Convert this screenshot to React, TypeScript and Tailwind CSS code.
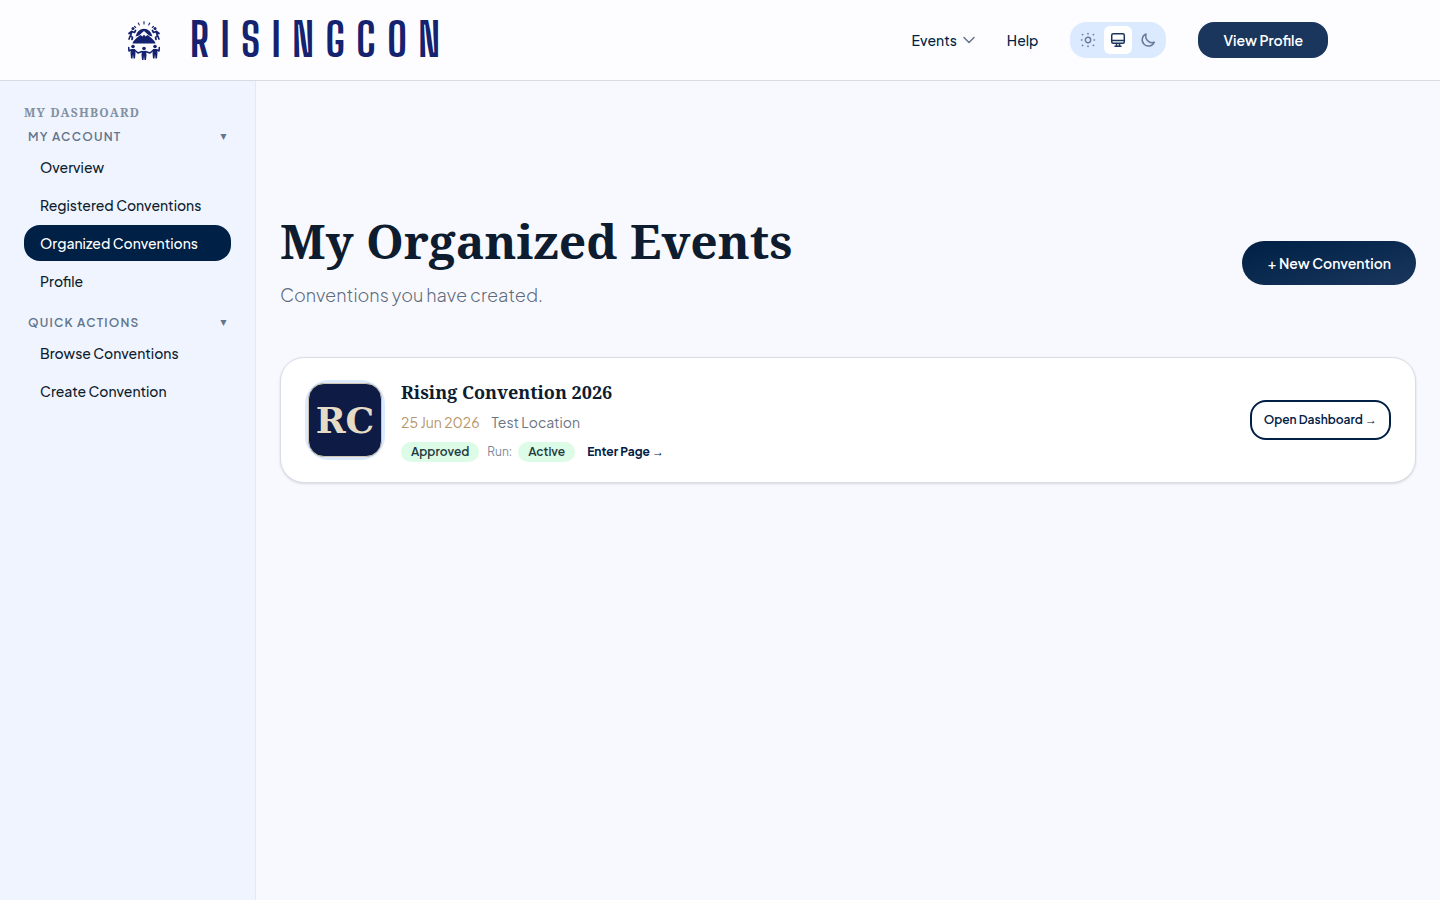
import React from 'react';

const sans = "font-['Plus_Jakarta_Sans','Inter',sans-serif]";
const serif = "font-['Noto_Serif','Droid_Serif','DejaVu_Serif',serif]";

const menu = [
  {
    title: 'My Account',
    items: ['Overview', 'Registered Conventions', 'Organized Conventions', 'Profile'],
  },
  {
    title: 'Quick Actions',
    items: ['Browse Conventions', 'Create Convention'],
  },
];

const activeItem = 'Organized Conventions';

const Emblem: React.FC = () => (
  <svg width="32" height="40" viewBox="0 0 32 40" fill="#15226f" aria-hidden="true">
    {/* Rays */}
    <g stroke="#15226f" strokeWidth="1.1" strokeLinecap="round">
      <path d="M16 1.5v2.5M10.300 3l1 2M21.700 3l-1 2M6.500 6.300l1.200 1.200M25.500 6.300l-1.200 1.200" />
    </g>
    {/* Sun */}
    <path d="M7.500 16.500a8.700 9.800 0 0 1 17 0l-3.500-1-5-4.500-5 4.500z" />
    {/* Mountain */}
    <path d="M4.500 23.500c.5-2.500 2.500-4 4-5.500l4-3 2 1.500 1.500-2 1.500 2 2-1.500 4 3c1.500 1.500 3.500 3 4 5.500z" />
    {/* Climbers */}
    <circle cx="5" cy="8.500" r="1.500" />
    <circle cx="27" cy="8.500" r="1.500" />
    <g fill="none" stroke="#15226f" strokeWidth="1.700" strokeLinecap="round" strokeLinejoin="round">
      <path d="M4 11.500l-1.500 4 2 2-.5 2M2.500 15.500l-1.500 3.500M4 11.500l2.500 1 1-2M3.500 11.500l-2.500 2" />
      <path d="M28 11.500l1.500 4-2 2 .5 2M29.500 15.500l1.500 3.500M28 11.500l-2.500 1-1-2M28.500 11.500l2.500 2" />
    </g>
    {/* People holding hands */}
    <circle cx="5" cy="26.500" r="1.800" />
    <circle cx="16" cy="28.500" r="1.800" />
    <circle cx="27" cy="26.500" r="1.800" />
    <path d="M3 29h4l.5 4-.5 5.500H5.500l-.5-4-.5 4H3l-.5-5.500zM14 31h4l.5 4-.5 5h-1.500l-.5-4-.5 4H14l-.5-5zM25 29h4l.5 4-.5 5.500h-1.500l-.5-4-.5 4H25l-.5-5.500z" />
    <g fill="none" stroke="#15226f" strokeWidth="1.600" strokeLinecap="round" strokeLinejoin="round">
      <path d="M3 30l-2 1-.3-3.500M6.500 30l3.500 3 4-1.500M17.500 31.500l4.500 1.500 3.500-3M29 30l2 1 .3-3.500" />
    </g>
  </svg>
);

const iconProps = {
  width: 16,
  height: 16,
  viewBox: '0 0 16 16',
  fill: 'none',
  stroke: 'currentColor',
  strokeLinecap: 'round' as const,
  strokeLinejoin: 'round' as const,
};

const SunIcon = () => (
  <svg {...iconProps}>
    <circle cx="8" cy="8" r="2.700" strokeWidth="1.400" />
    <path
      d="M8 1.500v.4M8 14.100v.4M1.500 8h.4M14.100 8h.4M2.500 2.500l.2.2M13.300 13.300l.2.2M2.500 13.500l.2-.2M13.300 2.700l.2-.2"
      strokeWidth="1.600"
    />
  </svg>
);

const MonitorIcon = () => (
  <svg {...iconProps} strokeWidth="1.500">
    <rect x="1.700" y="1.700" width="12.600" height="9.600" rx="1.500" />
    <path d="M2 8.500h12M6.500 11.500v2.500M9.500 11.500v2.500M5 14.200h6" />
  </svg>
);

const MoonIcon = () => (
  <svg {...iconProps} strokeWidth="1.500">
    <path d="M6 2A6.300 6.300 0 1 0 14.300 10.200C9.500 12 4.500 7.500 6 2Z" />
  </svg>
);

const Chevron = () => (
  <svg width="12" height="8" viewBox="0 0 12 8" fill="none" stroke="currentColor" strokeWidth="1.500" strokeLinecap="round" strokeLinejoin="round">
    <path d="M1 1.500l5 5 5-5" />
  </svg>
);

const Arrow = () => <span className="font-['Liberation_Sans',sans-serif] font-normal">→</span>;

const Header: React.FC = () => (
  <header className="border-b border-[#d8dbe0] bg-[#fdfdff]">
    <div className="max-w-7xl mx-auto px-8 h-20 flex items-center justify-between">
      <a href="#home" className="flex items-center gap-[30px] pl-4">
        <Emblem />
        <span className="font-['Big_Shoulders_Display','Oswald',sans-serif] text-[46px] leading-none font-bold tracking-[0.25em] text-[#15226f]">
          RISINGCON
        </span>
      </a>

      <nav className="flex items-center gap-8">
        <button className="flex items-center gap-1.5 text-sm font-medium text-[#001f45]">
          Events
          <span className="text-[#64748b]"><Chevron /></span>
        </button>
        <a href="#help" className="text-sm font-medium text-[#001f45]">Help</a>
        <div className="flex items-center gap-0.5 rounded-2xl bg-[#dbeafe] p-1 text-[#6b7a99]">
          <button aria-label="Light theme" className="w-7 h-7 flex items-center justify-center"><SunIcon /></button>
          <button aria-label="System theme" className="w-7 h-7 flex items-center justify-center rounded-md bg-white text-[#1a365d]">
            <MonitorIcon />
          </button>
          <button aria-label="Dark theme" className="w-7 h-7 flex items-center justify-center"><MoonIcon /></button>
        </div>
        <button className="h-9 rounded-2xl bg-[#1a365d] px-[25px] text-sm font-semibold text-white">View Profile</button>
      </nav>
    </div>
  </header>
);

const Sidebar: React.FC = () => (
  <aside className="w-64 shrink-0 border-r border-[#dbeafe] bg-[#eff4ff] px-6 pt-6">
    <h2 className={`${serif} text-xs leading-4 font-bold uppercase tracking-widest text-[#8290a1]`}>My Dashboard</h2>
    {menu.map((group) => (
      <section key={group.title} className="mb-2 pt-1">
        <button className="flex w-full items-center justify-between px-1 py-1 text-xs leading-4 font-semibold uppercase tracking-widest text-[#64748b]">
          {group.title}
          <span className="text-[8px] tracking-normal">▼</span>
        </button>
        <ul className="flex flex-col gap-0.5">
          {group.items.map((item) => (
            <li key={item}>
              <a
                href="#menu"
                className={`block rounded-2xl px-4 py-2 text-sm font-medium ${
                  item === activeItem ? 'bg-[#002045] text-white' : 'text-[#0d1c2e]'
                }`}
              >
                {item}
              </a>
            </li>
          ))}
        </ul>
      </section>
    ))}
  </aside>
);

const EventCard: React.FC = () => (
  <article className="flex items-center gap-4 rounded-3xl border border-[#d8dce4] bg-white px-6 py-5 shadow-sm">
    <div className="size-20 shrink-0 rounded-3xl bg-[#dbeafe] p-[3px]">
      <div className="flex size-full items-center justify-center rounded-2xl border border-[#cfc5ae] bg-[#0d1b45] font-['DejaVu_Serif',serif] text-4xl leading-none font-bold text-[#e6dcc5]">
        RC
      </div>
    </div>
    <div className="flex-1 pt-0.5">
      <h2 className={`${serif} text-lg leading-6 font-bold text-[#0d1c2e]`}>Rising Convention 2026</h2>
      <p className="mt-2 flex gap-3 text-sm">
        <span className="text-[#b8956a]">25 Jun 2026</span>
        <span className="text-[#6b7482]">Test Location</span>
      </p>
      <div className="mt-2.5 flex items-center text-xs leading-5 font-semibold text-[#1f3a3d]">
        <span className="rounded-full bg-[#dcfce7] px-2.5">Approved</span>
        <span className="ml-2 mr-1.5 font-normal text-[#7b8798]">Run:</span>
        <span className="rounded-full bg-[#dcfce7] px-2.5">Active</span>
        <a href="#page" className="ml-3 font-bold text-[#002045]">Enter Page <Arrow /></a>
      </div>
    </div>
    <a href="#dashboard" className="rounded-2xl border-2 border-[#002045] px-3 py-2 text-xs leading-5 font-semibold text-[#002045]">
      Open Dashboard <Arrow />
    </a>
  </article>
);

const App: React.FC = () => {
  return (
    <div className={`${sans} flex min-h-screen flex-col bg-[#f8f9ff]`}>
      <Header />
      <div className="flex flex-1">
        <Sidebar />
        <main className="flex-1 px-6 pt-32">
          <div className="mb-12 flex items-center justify-between">
            <div>
              <h1 className={`${serif} text-5xl leading-[64px] font-bold text-[#0d1c2e]`}>My Organized Events</h1>
              <p className="mt-2 text-lg leading-7 font-light text-[#5f6b7b]">Conventions you have created.</p>
            </div>
            <button className="mt-2 h-11 rounded-full bg-linear-to-br from-[#002045] to-[#1a365d] px-[25px] text-sm font-semibold text-white">
              + New Convention
            </button>
          </div>
          <EventCard />
        </main>
      </div>
    </div>
  );
};

export default App;
